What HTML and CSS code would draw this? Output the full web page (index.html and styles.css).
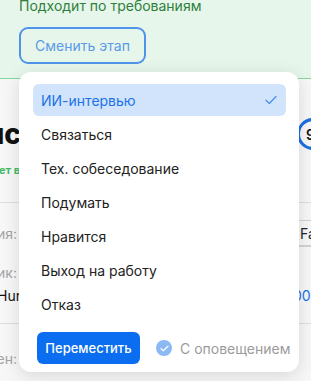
FILE: index.html
```html
<!DOCTYPE html>
<html lang="ru">
<head>
    <meta charset="UTF-8">
    <meta name="viewport" content="width=device-width, initial-scale=1.0">
    <title>Кандидат</title>
    <link rel="stylesheet" href="styles.css">
</head>
<body>
    <div class="page">
        <div class="match-block">
            <p class="match-text">Подходит по требованиям</p>
            <button class="stage-btn">Сменить этап</button>
        </div>

        <div class="candidate">
            <div class="name-row">
                <div class="left-col"><h1 class="name">Ирина Лоренс</h1></div>
                <div class="gap"></div>
                <div class="right-col"><span class="score">9</span></div>
            </div>
            <div class="tag-row">
                <div class="left-col"><span class="tag">Сейчас работает в</span></div>
            </div>
            <div class="field-row line-top">
                <div class="left-col"><span class="label">Вакансия:</span></div>
                <div class="gap"></div>
                <div class="right-col"><span class="input">Fa</span></div>
            </div>
            <div class="field-row tall">
                <div class="left-col col-stack">
                    <span class="label">Источник:</span>
                    <span class="value">Hur</span>
                </div>
                <div class="gap"></div>
                <div class="right-col"><span class="link">00</span></div>
            </div>
            <div class="field-row line-top last">
                <div class="left-col"><span class="label">Рекрутер назначен:</span></div>
                <div class="gap"></div>
            </div>
        </div>

        <div class="stage-menu">
            <ul class="stage-list">
                <li class="stage-item selected">
                    ИИ-интервью
                    <svg class="check" width="12" height="10" viewBox="0 0 12 10"><path d="M1 5.2 L4.3 8.5 L11 1.5" fill="none" stroke="#4b8ff0" stroke-width="1.3" stroke-linecap="round" stroke-linejoin="round"/></svg>
                </li>
                <li class="stage-item">Связаться</li>
                <li class="stage-item">Тех. собеседование</li>
                <li class="stage-item">Подумать</li>
                <li class="stage-item">Нравится</li>
                <li class="stage-item">Выход на работу</li>
                <li class="stage-item">Отказ</li>
            </ul>
            <div class="menu-footer">
                <button class="move-btn">Переместить</button>
                <label class="notify">
                    <span class="notify-box">
                        <svg width="9" height="7" viewBox="0 0 9 7"><path d="M1 3.6 L3.3 5.8 L8 1.2" fill="none" stroke="#fff" stroke-width="1.2" stroke-linecap="round" stroke-linejoin="round"/></svg>
                    </span>
                    С оповещением
                </label>
            </div>
        </div>
    </div>
</body>
</html>
```

FILE: styles.css
```css
* {
    box-sizing: border-box;
    margin: 0;
    padding: 0;
}
body {
    font-family: Inter, "Noto Sans", sans-serif;
    background-color: #f7f7f8;
    overflow: hidden;
}
.page {
    position: relative;
    width: 311px;
    height: 381px;
    overflow: hidden;
}
.match-block {
    margin-top: -4px;
    height: 83px;
    padding: 0 19px;
    background-color: #e7f6eb;
    border-bottom: 1px solid #80d89c;
}
.match-text {
    font-size: 14px;
    line-height: 20px;
    color: #2f7f3c;
}
.stage-btn {
    margin-top: 11px;
    width: 127px;
    height: 37px;
    border: 2px solid #4f94ea;
    border-radius: 9px;
    background-color: transparent;
    font-family: inherit;
    font-size: 14px;
    color: #5b9ae9;
}
.candidate {
    display: flex;
    flex-direction: column;
}
.name-row, .field-row, .tag-row {
    display: flex;
    align-items: center;
}
.left-col {
    width: 19px;
    flex-shrink: 0;
    display: flex;
    justify-content: flex-end;
    overflow: hidden;
    white-space: nowrap;
}
.gap {
    width: 278px;
    flex-shrink: 0;
}
.right-col {
    flex: 1;
    display: flex;
    white-space: nowrap;
}
.name-row {
    height: 72px;
    padding-top: 38px;
}
.name {
    font-size: 28px;
    font-weight: 800;
    color: #111;
    line-height: 34px;
    margin-right: -2px;
}
.score {
    width: 32px;
    height: 32px;
    flex-shrink: 0;
    border: 3px solid #1b6fe3;
    border-radius: 50%;
    display: flex;
    align-items: center;
    padding-left: 6px;
    font-size: 14px;
    font-weight: 600;
    color: #111;
}
.tag-row {
    height: 16px;
    margin-top: 11px;
    margin-bottom: 24px;
}
.tag {
    font-size: 11px;
    font-weight: 700;
    color: #3fbd64;
    margin-right: -1px;
}
.line-top {
    border-top: 1px solid #dedede;
}
.field-row {
    height: 62px;
}
.label {
    font-size: 14px;
    line-height: 17px;
    color: #a3a3a3;
    margin-right: 2px;
}
.input {
    width: 40px;
    height: 27px;
    border-top: 1px solid #d2d2d2;
    border-bottom: 2px solid #d2d2d2;
    display: flex;
    align-items: center;
    padding-left: 3px;
    font-size: 14px;
    color: #222;
}
.field-row.tall {
    height: 59px;
    align-items: flex-start;
}
.col-stack {
    flex-direction: column;
    align-items: flex-end;
    gap: 6px;
}
.value {
    font-size: 14px;
    line-height: 17px;
    color: #111;
    align-self: flex-start;
    margin-left: -3px;
}
.link {
    margin-top: 23px;
    font-size: 14px;
    line-height: 17px;
    color: #1a73e8;
    margin-left: -4px;
}
.field-row.last {
    align-items: flex-start;
    padding-top: 26px;
}
.stage-menu {
    position: absolute;
    left: 19px;
    top: 72px;
    width: 280px;
    height: 300px;
    padding: 12px 13px 8px 14px;
    background-color: #fff;
    border-radius: 12px;
    box-shadow: 0 4px 18px rgba(0, 0, 0, 0.13);
}
.stage-list {
    list-style: none;
    display: flex;
    flex-direction: column;
    gap: 2px;
}
.stage-item {
    height: 32px;
    padding: 0 8px;
    display: flex;
    align-items: center;
    justify-content: space-between;
    border-radius: 6px;
    font-size: 14px;
    color: #222;
}
.stage-item.selected {
    background-color: #d1e4fb;
    color: #1c72e6;
}
.check {
    margin-right: 1px;
}
.menu-footer {
    margin-top: 12px;
    padding-left: 4px;
    display: flex;
    align-items: center;
    gap: 16px;
}
.move-btn {
    width: 103px;
    height: 32px;
    flex-shrink: 0;
    border: none;
    border-radius: 6px;
    background-color: #0b6ef0;
    color: #fff;
    font-family: inherit;
    font-size: 13px;
    font-weight: 500;
}
.notify {
    display: flex;
    flex-shrink: 0;
    align-items: center;
    gap: 8px;
    white-space: nowrap;
    font-size: 14px;
    color: #9b9b9b;
}
.notify-box {
    width: 16px;
    height: 16px;
    border-radius: 50%;
    background-color: #8bb9f4;
    display: flex;
    align-items: center;
    justify-content: center;
}
```
